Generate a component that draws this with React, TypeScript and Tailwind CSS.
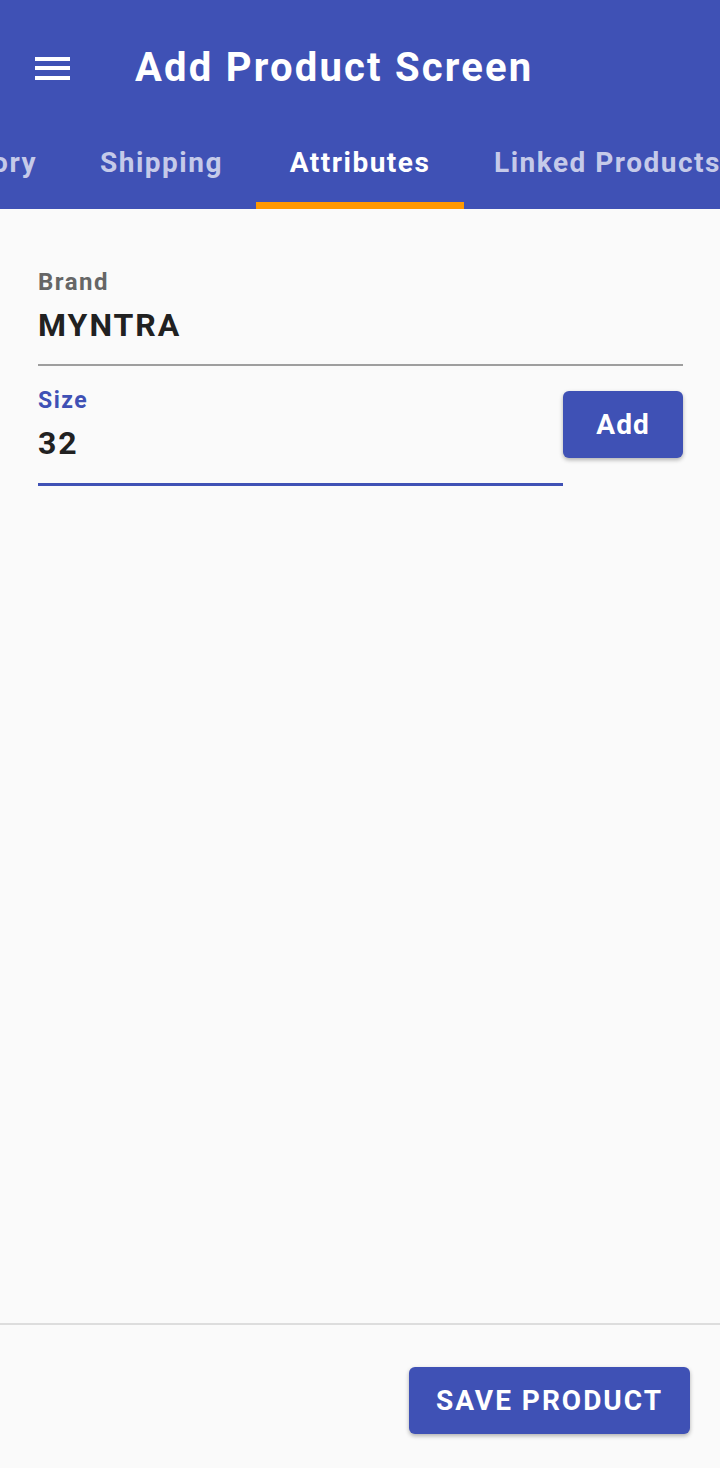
import React from 'react';

function App() {
  const tabs = [
    { id: 'inventory', label: 'Inventory', width: 'w-[202px]', align: 'justify-end pr-[30px]', active: false },
    { id: 'shipping', label: 'Shipping', width: 'w-[189px]', align: 'justify-center', active: false },
    { id: 'attributes', label: 'Attributes', width: 'w-[208px]', align: 'justify-center', active: true },
    { id: 'linked', label: 'Linked Products', width: 'w-[290px]', align: 'justify-start pl-[30px]', active: false },
  ];

  return (
    <div className="w-[720px] h-[1468px] flex flex-col bg-[#fafafa] font-['Roboto',sans-serif] overflow-hidden">
      {/* App bar */}
      <div className="bg-[#3f51b5] h-[209px] flex flex-col shrink-0">
        <div className="h-[136px] flex items-center">
          <button className="ml-[35px] w-[35px] flex flex-col gap-[5.5px]">
            <span className="block h-[4px] bg-white" />
            <span className="block h-[4px] bg-white" />
            <span className="block h-[4px] bg-white" />
          </button>
          <h1 className="ml-[65px] text-white text-[40px] font-bold tracking-[2.2px]">Add Product Screen</h1>
        </div>

        {/* Tabs */}
        <div className="flex-1 flex overflow-hidden">
          <div className="flex ml-[-135px] shrink-0">
            {tabs.map((tab) => (
              <div
                key={tab.id}
                className={`${tab.width} ${tab.align} shrink-0 h-full flex items-center border-b-[7px] ${tab.active ? 'border-[#ff9800] text-white' : 'border-transparent text-[#c5cae9]'}`}
              >
                <span className="text-[28px] font-bold tracking-[1.5px] whitespace-nowrap mb-[12px]">{tab.label}</span>
              </div>
            ))}
          </div>
        </div>
      </div>

      {/* Form */}
      <div className="flex-1 px-[38px] pt-[59px]">
        <div className="mr-[-1px] border-b-2 border-[#9e9e9e] pb-[21px]">
          <div className="text-[24px] font-bold text-[#666666] leading-[28px] tracking-[1.5px]">Brand</div>
          <div className="text-[32px] font-bold text-[#212121] leading-[36px] tracking-[2px] mt-[11px]">MYNTRA</div>
        </div>

        <div className="flex items-start mt-[21px] mr-[-1px]">
          <div className="flex-1 border-b-[3px] border-[#3f51b5] pb-[22px]">
            <div className="text-[23px] font-bold text-[#3f51b5] leading-[28px] tracking-[1.5px]">Size</div>
            <div className="text-[32px] font-bold text-[#212121] leading-[36px] tracking-[2px] mt-[10px]">32</div>
          </div>
          <button className="w-[120px] h-[67px] rounded-[6px] bg-[#3f51b5] text-white text-[28px] font-bold tracking-[1px] shadow-[0_2px_4px_rgba(0,0,0,0.3)] mt-[4px]">
            Add
          </button>
        </div>
      </div>

      {/* Footer */}
      <div className="h-[145px] border-t-2 border-[#dddddd] flex justify-end items-start pr-[30px] pt-[42px] shrink-0">
        <button className="w-[281px] h-[67px] rounded-[6px] bg-[#3f51b5] text-white text-[28px] font-bold tracking-[2px] shadow-[0_2px_4px_rgba(0,0,0,0.3)]">
          SAVE PRODUCT
        </button>
      </div>
    </div>
  );
}

export default App;
